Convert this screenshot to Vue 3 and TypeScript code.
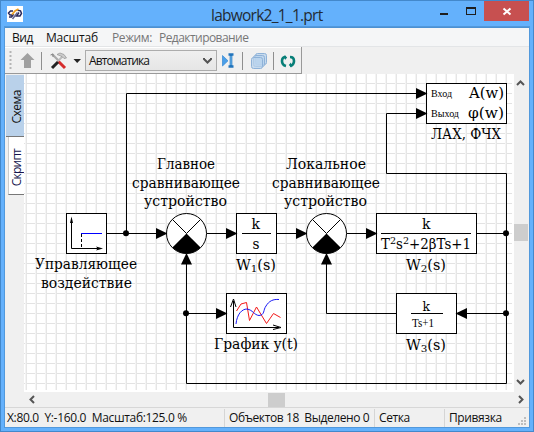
<script setup lang="ts">
interface Part {
  text: string
  dy?: number
  small?: boolean
}

interface Label {
  text?: string
  parts?: Part[]
  x: number
  y: number
  width: number
  size?: number
  thin?: boolean
}

const menu = [
  { text: 'Вид', cls: 'view' },
  { text: 'Масштаб', cls: 'scale' },
  { text: 'Режим:', cls: 'mode' },
  { text: 'Редактирование', cls: 'editing' },
]

const transfer = (index: string): Part[] => [
  { text: 'W' }, { text: index, dy: 2, small: true }, { text: '(s)', dy: -2 },
]

const labels: Label[] = [
  { text: 'Главное', x: 157, y: 169, width: 58 },
  { text: 'сравнивающее', x: 132, y: 188, width: 108 },
  { text: 'устройство', x: 144, y: 206, width: 83 },
  { text: 'Локальное', x: 286, y: 169, width: 80 },
  { text: 'сравнивающее', x: 272, y: 188, width: 108 },
  { text: 'устройство', x: 284, y: 206, width: 83 },
  { text: 'Управляющее', x: 35, y: 269, width: 102 },
  { text: 'воздействие', x: 41, y: 288, width: 91 },
  { text: 'k', x: 251.5, y: 229, width: 8.5 },
  { text: 's', x: 252.5, y: 249, width: 7 },
  { text: 'k', x: 422, y: 229, width: 8.5 },
  {
    parts: [
      { text: 'T' }, { text: '2', dy: -5, small: true }, { text: 's', dy: 5 },
      { text: '2', dy: -5, small: true }, { text: '+2βTs+1', dy: 5 },
    ],
    x: 381, y: 249, width: 90,
  },
  { parts: transfer('1'), x: 236, y: 269.5, width: 40 },
  { parts: transfer('2'), x: 406, y: 269.5, width: 40 },
  { parts: transfer('3'), x: 406, y: 349.5, width: 40 },
  { text: 'График y(t)', x: 214, y: 349, width: 84 },
  { text: 'A(w)', x: 469, y: 98, width: 35, size: 15 },
  { text: 'φ(w)', x: 468, y: 118, width: 36, size: 15 },
  { text: 'ЛАХ, ФЧХ', x: 431, y: 139, width: 70 },
  { text: 'Вход', x: 431, y: 97, width: 21, size: 9.5, thin: true },
  { text: 'Выход', x: 431, y: 117, width: 28, size: 9.5, thin: true },
  { text: 'k', x: 422.5, y: 311, width: 7.5, size: 12.5 },
  { text: 'Ts+1', x: 412, y: 327, width: 22, size: 13.5, thin: true },
]

const wires = [
  'M106.5 233.5H160', 'M126.5 233.5V93.5H420', 'M206.5 233.5H230', 'M276.5 233.5H300',
  'M346.5 233.5H370', 'M476.5 233.5H506.5', 'M420 113.5H386.5V173.5H506.5V383.5H186.5V260',
  'M186.5 313.5H220', 'M506.5 313.5H462', 'M396.5 313.5H326.5V260',
]

const boxes = [
  [66.5, 213.5, 40], [236.5, 213.5, 40], [376.5, 213.5, 100],
  [426.5, 83.5, 80], [226.5, 293.5, 60], [396.5, 293.5, 60],
]

const arrows = [
  [167.5, 233.5, 0], [237.5, 233.5, 0], [307.5, 233.5, 0], [377.5, 233.5, 0],
  [427.5, 93.5, 0], [427.5, 113.5, 0], [227.5, 313.5, 0],
  [186.5, 253, -90], [326.5, 253, -90], [455.5, 313.5, 180],
]

const dots = [[126, 233], [186, 313], [506, 233], [506, 313]]
const sums = [186.5, 326.5]
</script>

<template>
  <div class="window">
    <header class="title">
      <svg class="logo" width="16" height="16" viewBox="0 0 16 16">
        <rect width="16" height="16" fill="#fff" />
        <g fill="none" stroke="#2b2a5c" stroke-width="1.5">
          <path d="M6 5H3.5L1.5 7 3 9H6L4.5 11H2" />
          <path d="M10.5 4.2L13.5 4.8 14.5 7.5 13 10H9.5L12 6.5" />
          <path d="M5.5 13L10.5 6.5" stroke="#65648c" />
        </g>
        <path d="M5 8.5L8 5L11.5 3" fill="none" stroke="#f0a020" stroke-width="1.7" />
      </svg>
      <span class="caption">labwork2_1_1.prt</span>
      <div class="controls">
        <svg width="44" height="20" viewBox="0 0 44 20">
          <path d="M0 13H8" stroke="#1e1e1e" stroke-width="2" />
          <path d="M26 6H36V14H26Z M27 8V13H35V8Z" fill="#1e1e1e" fill-rule="evenodd" />
        </svg>
        <svg class="close" width="45" height="20" viewBox="0 0 45 20">
          <path d="M19.5 7.5L26.5 13.5M26.5 7.5L19.5 13.5" stroke="#fff" stroke-width="2" />
        </svg>
      </div>
    </header>

    <div class="client">
      <nav class="menu">
        <span v-for="m in menu" :key="m.text" :class="m.cls">{{ m.text }}</span>
      </nav>

      <div class="toolrow">
        <div class="toolbar">
          <svg width="80" height="25" viewBox="5 48 80 25">
            <path d="M10.5 51V70" stroke="#b5b5b5" stroke-width="2" stroke-dasharray="2 2" />
            <path d="M27.5 53L34.5 60H31V68H24V60H20.5Z" fill="#a0a0a0" />
            <path d="M41.5 52V70" stroke="#8e8e8e" />
            <path d="M58 61L65 68" stroke="#d52b2b" stroke-width="3" />
            <path d="M58 62L52 68" stroke="#222" stroke-width="3" />
            <path d="M52 54L59 61" stroke="#aaa" stroke-width="2.2" />
            <path d="M58 61L63 56" stroke="#bbb" stroke-width="2" />
            <path d="M50.5 55L53 54L53 57" fill="none" stroke="#888" />
            <path d="M57 54.5L60 53L64 54.5L66.5 58L64 58.5L62 56.5Z" fill="#ccc" stroke="#929292" stroke-width=".7" />
            <path d="M73.5 59H81L77.2 63Z" fill="#222" />
          </svg>
          <div class="combo">
            <span>Автоматика</span>
            <svg width="9" height="7" viewBox="0 0 9 7"><path d="M1 1V2L4.5 5.5 8 2V1" fill="none" stroke="#555" stroke-width="2" /></svg>
          </div>
          <svg width="84" height="25" viewBox="217 48 84 25">
            <path d="M222.5 55.5V66L228 60.8Z" fill="#4a9ee8" stroke="#3388d3" stroke-width=".7" />
            <path d="M228.5 54.5H233.5M228.5 66.5H233.5M231 55V66" stroke="#2375bc" stroke-width="2.6" />
            <path d="M231 56V65" stroke="#7cc2f5" />
            <path d="M242.5 52V70" stroke="#8e8e8e" />
            <g stroke="#8eb2d8" fill="#b9d3ec" fill-opacity=".75">
              <rect x="255.5" y="53.5" width="11" height="11" rx="2" />
              <rect x="253.5" y="55.5" width="11" height="11" rx="2" />
              <rect x="251.5" y="57.5" width="11" height="11" rx="2" />
            </g>
            <path d="M273.5 52V70" stroke="#8e8e8e" />
            <path d="M286 57Q282 57 282 61Q282 65 286 66" fill="none" stroke="#087f78" stroke-width="2.6" />
            <path d="M290 57Q294 57 294 61Q294 65 290 66" fill="none" stroke="#087f78" stroke-width="2.6" />
            <path d="M284.5 55L287.2 57.5L285 60ZM291.5 67.5L288.8 65L291 62.5Z" fill="#087f78" />
          </svg>
        </div>
      </div>

      <main class="work">
        <aside class="tabs">
          <div class="tab active"><span>Схема</span></div>
          <div class="tab script"><span>Скрипт</span></div>
        </aside>

        <svg class="canvas" width="490" height="318" viewBox="24 74 490 318">
          <defs>
            <pattern id="grid" x="26" y="73" width="10" height="10" patternUnits="userSpaceOnUse">
              <path d="M0 .5H10" stroke="#e3e3e3" />
              <path d="M.5 0V10" stroke="#e6e6e6" />
              <path d="M9.5 0V10" stroke="#f4f4f4" />
            </pattern>
          </defs>
          <rect x="24" y="74" width="490" height="318" fill="#fff" />
          <rect x="24" y="74" width="488" height="316" fill="url(#grid)" />

          <path v-for="d in wires" :key="d" :d="d" fill="none" stroke="#000" />
          <rect v-for="(b, i) in boxes" :key="i" :x="b[0]" :y="b[1]" :width="b[2]" height="40" fill="#fff" stroke="#000" />
          <g v-for="x in sums" :key="x" :transform="`translate(${x} 233.5)`">
            <circle r="20" fill="#fff" stroke="#000" />
            <path d="M0 0L14.1 14.1A20 20 0 0 1 -14.1 14.1Z" />
            <path d="M-14.1 -14.1L0 0L14.1 -14.1" fill="none" stroke="#000" />
          </g>
          <path v-for="(a, i) in arrows" :key="i" d="M0 0L-11.5 -5.5V5.5Z" :transform="`translate(${a[0]} ${a[1]}) rotate(${a[2]})`" />
          <circle v-for="(d, i) in dots" :key="i" :cx="d[0]" :cy="d[1] + 0.2" r="3" />

          <path d="M242 233.5H271M381 233.5H471M411 313.5H443" stroke="#000" />

          <path d="M71.5 220V248.5H100" fill="none" stroke="#000" />
          <path d="M71.5 216.5L73 223H70ZM103 248.5L96 250.5L97.5 248.5L96 246.5Z" />
          <path d="M81.5 234V248" stroke="#000" stroke-dasharray="3 2" />
          <path d="M81 233.5H102" stroke="#0000ff" />

          <path d="M233.5 301V327.5H279" fill="none" stroke="#000" />
          <path d="M230.5 307L233.5 299L236 307M273 325L281 327.5L273 329.5" fill="none" stroke="#000" />
          <path d="M236.5 311L241 304L246.5 302.5L249.5 320.5L256.5 307L266.5 323.5L273.5 313.5L280.5 317.5" fill="none" stroke="#f21818" />
          <path d="M236 324C237 314 242 309 247 309C253 310 254 315 259 315.5C265 315 263 310 266 306C269 301 273 299 279 299.5" fill="none" stroke="#1818f5" />

          <text
            v-for="(l, i) in labels" :key="i" :x="l.x" :y="l.y" :textLength="l.width"
            lengthAdjust="spacingAndGlyphs" :font-size="l.size ?? 14" :class="{ thin: l.thin }"
          ><tspan
            v-for="(p, j) in l.parts ?? [{ text: l.text ?? '' }]" :key="j"
            :dy="(p as Part).dy ?? 0" :class="{ small: (p as Part).small }"
          >{{ p.text }}</tspan></text>
        </svg>

        <div class="vscroll">
          <svg width="9" height="6" viewBox="0 0 9 6"><path d="M1 5L4.5 1.5L8 5" /></svg>
          <i></i>
          <svg width="9" height="6" viewBox="0 0 9 6"><path d="M1 1L4.5 4.5L8 1" /></svg>
        </div>
      </main>

      <div class="hscroll">
        <svg width="6" height="9" viewBox="0 0 6 9"><path d="M5 1L1.5 4.5L5 8" /></svg>
        <i></i>
        <svg width="6" height="9" viewBox="0 0 6 9"><path d="M1 1L4.5 4.5L1 8" /></svg>
      </div>

      <footer class="status">
        <span class="cell coords">X:80.0&nbsp; Y:-160.0&nbsp; Масштаб:125.0 %</span>
        <span class="cell objects">Объектов 18&nbsp; Выделено 0</span>
        <span class="cell net">Сетка</span>
        <span class="cell snap">Привязка</span>
        <svg class="grip" width="9" height="9" viewBox="0 0 9 9">
          <path d="M6 0H8V2H6ZM3 3H5V5H3ZM6 3H8V5H6ZM0 6H2V8H0ZM3 6H5V8H3ZM6 6H8V8H6Z" fill="#bdbdbd" />
        </svg>
      </footer>
    </div>
  </div>
</template>

<style>
body { margin: 0; overflow: hidden; }
</style>

<style scoped>
.window {
  box-sizing: border-box; width: 534px; height: 432px; padding: 0 4px 4px;
  border: 1px solid #4388cb; border-bottom-width: 0;
  background: #64b1fc; color: #111;
  font: 12px/16px "Open Sans", "Noto Sans", sans-serif; white-space: nowrap;
  box-shadow: inset 0 -1px #4388cb;
}
.title { display: flex; height: 26px; align-items: flex-start; }
.logo { margin: 5px 0 0 2px; }
.caption { margin: 2px 0 0 188px; font-size: 15.5px; line-height: 24px; width: 112px; color: #222b35; letter-spacing: -.75px; }
.controls { display: flex; margin-left: auto; }
.close { background: #c75050; }
.client { height: 400px; width: 524px; box-sizing: border-box; background: #f0f0f0; border-top: 1px solid #4c91d3; outline: 1px solid #5299dc; }
.menu { display: flex; height: 18px; background: #f5f6f7; border-bottom: 1px solid #e3e5e7; line-height: 20px; padding-left: 7px; }
.view { width: 34px; letter-spacing: -.5px; }
.scale { width: 66px; letter-spacing: -.2px; }
.mode { width: 47px; color: #777; letter-spacing: -.4px; }
.editing { color: #777; letter-spacing: -.55px; }
.toolrow { height: 27px; }
.toolbar { box-sizing: border-box; display: flex; width: 297px; height: 27px; border: solid #999; border-width: 0 1px 1px 0; padding-top: 1px; box-shadow: inset 0 1px #fff; }
.combo { box-sizing: border-box; display: flex; flex: none; align-items: center; justify-content: space-between; width: 132px; height: 21px; margin-top: 2px; padding: 0 4px 0 3px; border: 1px solid #acacac; background: linear-gradient(#efefef, #e6e6e6); letter-spacing: -.9px; }
.work { display: flex; height: 318px; }
.tabs { width: 19px; }
.tab { box-sizing: border-box; display: flex; align-items: center; justify-content: center; border-bottom: 1px solid #777; overflow: hidden; }
.tab span { writing-mode: vertical-rl; transform: rotate(180deg); letter-spacing: -.5px; }
.active { width: 18px; height: 62px; margin: 1px 0 0 1px; padding: 3px 0 0 3px; background: #b9d1ea; }
.script { width: 16px; height: 58px; margin-left: 3px; padding-top: 4px; background: #fff; border-left: 1px solid #ccc; color: #15154d; }
.script span { letter-spacing: -.75px; }
.canvas { display: block; flex: none; }
.canvas text { font-family: "DejaVu Serif", serif; }
.canvas text.thin { font-family: "Liberation Serif", serif; }
.small { font-size: 10px; }
.vscroll { display: flex; flex-direction: column; align-items: flex-start; width: 15px; }
.vscroll svg { margin: 6px 0 0 2px; }
.vscroll i { width: 14px; height: 17px; margin: 138px 0 132px; background: #cdcdcd; }
.hscroll { display: flex; align-items: center; height: 15px; padding-left: 24px; }
.hscroll i { width: 17px; height: 14px; margin: 0 233px 0 233px; background: #cdcdcd; }
.hscroll path, .vscroll path { fill: none; stroke: #555; stroke-width: 2; }
.status { display: flex; height: 20px; border-top: 1px solid #d7d7d7; line-height: 19px; }
.cell { box-sizing: border-box; flex: none; padding-left: 4px; border-left: 1px solid #d5d5d5; margin: 1px 0; line-height: 18px; letter-spacing: -.4px; }
.coords { width: 219px; border-left: 0; padding-left: 2px; letter-spacing: -.33px; }
.objects { width: 150px; }
.net { width: 70px; }
.snap { width: 75px; }
.grip { margin: 9px 0 0 -1px; }
</style>
